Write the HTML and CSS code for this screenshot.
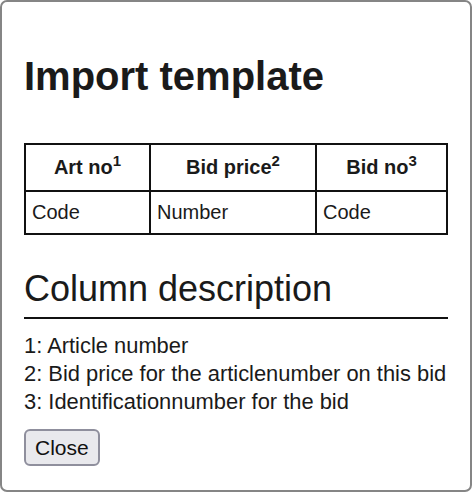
FILE: index.html
```html
<!DOCTYPE html>
<html lang="en">
<head>
  <meta charset="UTF-8" />
  <meta name="viewport" content="width=device-width, initial-scale=1.0"/>
  <title>Import template</title>
  <link rel="stylesheet" href="styles.css">
</head>
<body>
  <div class="dialog">
    <h1>Import template</h1>
    <table class="template">
      <thead>
        <tr>
          <th class="col-art">Art no<sup>1</sup></th>
          <th class="col-price">Bid price<sup>2</sup></th>
          <th>Bid no<sup>3</sup></th>
        </tr>
      </thead>
      <tbody>
        <tr>
          <td>Code</td>
          <td>Number</td>
          <td>Code</td>
        </tr>
      </tbody>
    </table>

    <h2>Column description</h2>
    <div class="desc">
      <div>1: Article number</div>
      <div>2: Bid price for the articlenumber on this bid</div>
      <div>3: Identificationnumber for the bid</div>
    </div>
    <button class="close">Close</button>
  </div>
</body>
</html>
```

FILE: styles.css
```css
html, body {
  margin: 0;
  padding: 0;
  background: #fff;
}
body {
  font-family: 'Liberation Sans', Arial, sans-serif;
  color: #1a1a1a;
}
.dialog {
  box-sizing: border-box;
  width: 472px;
  height: 492px;
  border: 2px solid #858585;
  border-radius: 7px;
  padding: 0 22px;
  background: #fff;
}
h1 {
  font-size: 40px;
  font-weight: bold;
  margin: 50px 0 0;
  line-height: 48px;
}
.template {
  width: 100%;
  margin-top: 43px;
  border-collapse: collapse;
  font-size: 20px;
}
.template th,
.template td {
  border: 2px solid #111;
}
.template th {
  height: 45px;
  font-weight: bold;
  padding: 0 6px;
}
.template td {
  height: 41px;
  padding: 0 6px;
  text-align: left;
}
.template sup {
  font-size: 15px;
  line-height: 0;
}
.col-art {
  width: 111px;
}
.col-price {
  width: 152px;
}
h2 {
  font-size: 36px;
  font-weight: normal;
  margin: 34px 0 0;
  padding-bottom: 8px;
  line-height: 40px;
  border-bottom: 2px solid #111;
}
.desc {
  margin-top: 13px;
  font-size: 21.9px;
  line-height: 28px;
  white-space: nowrap;
}
.close {
  margin-top: 13px;
  font-family: inherit;
  font-size: 21px;
  line-height: 25px;
  color: #111;
  background: #e9e9ed;
  border: 2px solid #8f8f9d;
  border-radius: 6px;
  padding: 4px 9px;
}
```
